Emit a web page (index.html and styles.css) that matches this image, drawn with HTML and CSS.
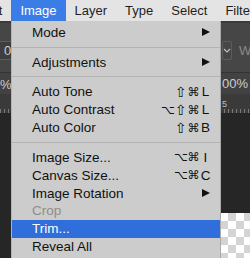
FILE: index.html
```html
<!DOCTYPE html>
<html>
<head>
  <title>Image menu</title>
  <link rel="stylesheet" href="styles.css">
</head>
<body>
  <div class="menubar">
    <span class="mb-item first">Edit</span>
    <span class="mb-item open">Image</span>
    <span class="mb-item">Layer</span>
    <span class="mb-item">Type</span>
    <span class="mb-item">Select</span>
    <span class="mb-item">Filter</span>
  </div>

  <div class="app">
    <div class="options">
      <div class="field">0</div>
      <div class="tail">
        <div class="select-box">
          <svg width="8" height="5" viewBox="0 0 8 5"><path d="M1 1l3 3 3-3" fill="none" stroke="#bdbdbd" stroke-width="1.2"/></svg>
        </div>
        <span class="dim">W</span>
      </div>
    </div>
    <div class="tabs">
      <span>%</span>
      <span class="tail">00% (</span>
    </div>
    <div class="ruler">
      <span class="tail ruler-num">5</span>
    </div>
    <div class="canvas">
      <div class="doc"></div>
    </div>
  </div>

  <div class="menu">
    <div class="row"><span class="label">Mode</span><span class="keys"><span class="key"><i class="arrow"></i></span></span></div>
    <div class="sep"></div>
    <div class="row"><span class="label">Adjustments</span><span class="keys"><span class="key"><i class="arrow"></i></span></span></div>
    <div class="sep"></div>
    <div class="row"><span class="label">Auto Tone</span><span class="keys"><span class="mod shift">⇧</span><span class="mod">⌘</span><span class="key">L</span></span></div>
    <div class="row"><span class="label">Auto Contrast</span><span class="keys"><span class="mod">⌥</span><span class="mod shift">⇧</span><span class="mod">⌘</span><span class="key">L</span></span></div>
    <div class="row"><span class="label">Auto Color</span><span class="keys"><span class="mod shift">⇧</span><span class="mod">⌘</span><span class="key">B</span></span></div>
    <div class="sep"></div>
    <div class="row"><span class="label">Image Size...</span><span class="keys"><span class="mod">⌥</span><span class="mod">⌘</span><span class="key">I</span></span></div>
    <div class="row"><span class="label">Canvas Size...</span><span class="keys"><span class="mod">⌥</span><span class="mod">⌘</span><span class="key">C</span></span></div>
    <div class="row"><span class="label">Image Rotation</span><span class="keys"><span class="key"><i class="arrow"></i></span></span></div>
    <div class="row disabled"><span class="label">Crop</span></div>
    <div class="row active"><span class="label">Trim...</span></div>
    <div class="row"><span class="label">Reveal All</span></div>
    <div class="row"><span class="label">Duplicate...</span></div>
  </div>
</body>
</html>
```

FILE: styles.css
```css
body {
  margin: 0;
  width: 250px;
  height: 258px;
  overflow: hidden;
  background: #262626;
  font-family: "Liberation Sans", Arial, sans-serif;
  position: relative;
}

.menubar {
  display: flex;
  height: 21px;
  line-height: 21px;
  background: #e4e4e4;
  font-size: 13px;
  color: #1e1e1e;
  white-space: nowrap;
}

.mb-item {
  padding: 0 9px;
}

.mb-item.first {
  margin-left: -29px;
}

.mb-item.open {
  background: #3b7de7;
  color: #fff;
}

.app {
  display: flex;
  flex-direction: column;
  color: #cfcfcf;
  font-size: 13px;
}

.options {
  display: flex;
  align-items: center;
  height: 51px;
  background: #464646;
  border-top: 2px solid #3a3a3a;
  box-sizing: border-box;
  padding-top: 5px;
}

.field {
  margin-left: -14px;
  width: 16px;
  height: 17px;
  line-height: 17px;
  padding-left: 17px;
  border: 1px solid #5c5c5c;
  border-radius: 2px;
  background: #3e3e3e;
}

.tail {
  margin-left: auto;
  width: 28px;
  white-space: nowrap;
  display: flex;
  align-items: center;
}

.select-box {
  width: 15px;
  height: 17px;
  border: 1px solid #5c5c5c;
  border-radius: 2px;
  display: flex;
  align-items: center;
  justify-content: center;
}

.dim {
  margin-left: 7px;
  color: #8a8a8a;
}

.tabs {
  display: flex;
  height: 21px;
  line-height: 23px;
  background: #424242;
  border-top: 1px solid #333;
}

.ruler {
  display: flex;
  height: 19px;
  background: #3a3a3a
    repeating-linear-gradient(to right, #7a7a7a 0 1px, transparent 1px 4px) 0 100% / 100% 4px no-repeat;
  font-size: 9px;
  color: #bdbdbd;
}

.ruler-num {
  padding-left: 18px;
  line-height: 14px;
}

.canvas {
  height: 146px;
  padding-top: 100px;
  box-sizing: border-box;
  background: #262626;
}

.doc {
  margin-left: 60px;
  height: 100%;
  background: repeating-conic-gradient(#d4d4d4 0 25%, #fff 0 50%) 0 0 / 16px 16px;
}

/* dropdown */
.menu {
  position: absolute;
  left: 11px;
  top: 21px;
  width: 208px;
  padding-top: 2.5px;
  background: #cccccc;
  border-left: 1px solid #b4b4b4;
  border-right: 1px solid #a9a9a9;
  color: #111;
  font-size: 13.5px;
}

.row {
  display: flex;
  align-items: center;
  height: 17.9px;
  padding: 0 9px 0 20px;
  white-space: nowrap;
}

.row.disabled {
  color: #8e8e8e;
}

.row.active {
  background: #2f6edb;
  color: #fff;
}

.keys {
  margin-left: auto;
  display: flex;
  align-items: center;
}

.mod {
  width: 13px;
  text-align: center;
  font-family: "DejaVu Sans", sans-serif;
  font-size: 12px;
}

.mod.shift {
  font-size: 14px;
}

.key {
  width: 11px;
  display: flex;
  justify-content: center;
}

.arrow {
  width: 0;
  height: 0;
  border-left: 8px solid #111;
  border-top: 4.5px solid transparent;
  border-bottom: 4.5px solid transparent;
}

.sep {
  height: 1px;
  margin: 5.4px 0;
  background: #b3b3b3;
}
```
